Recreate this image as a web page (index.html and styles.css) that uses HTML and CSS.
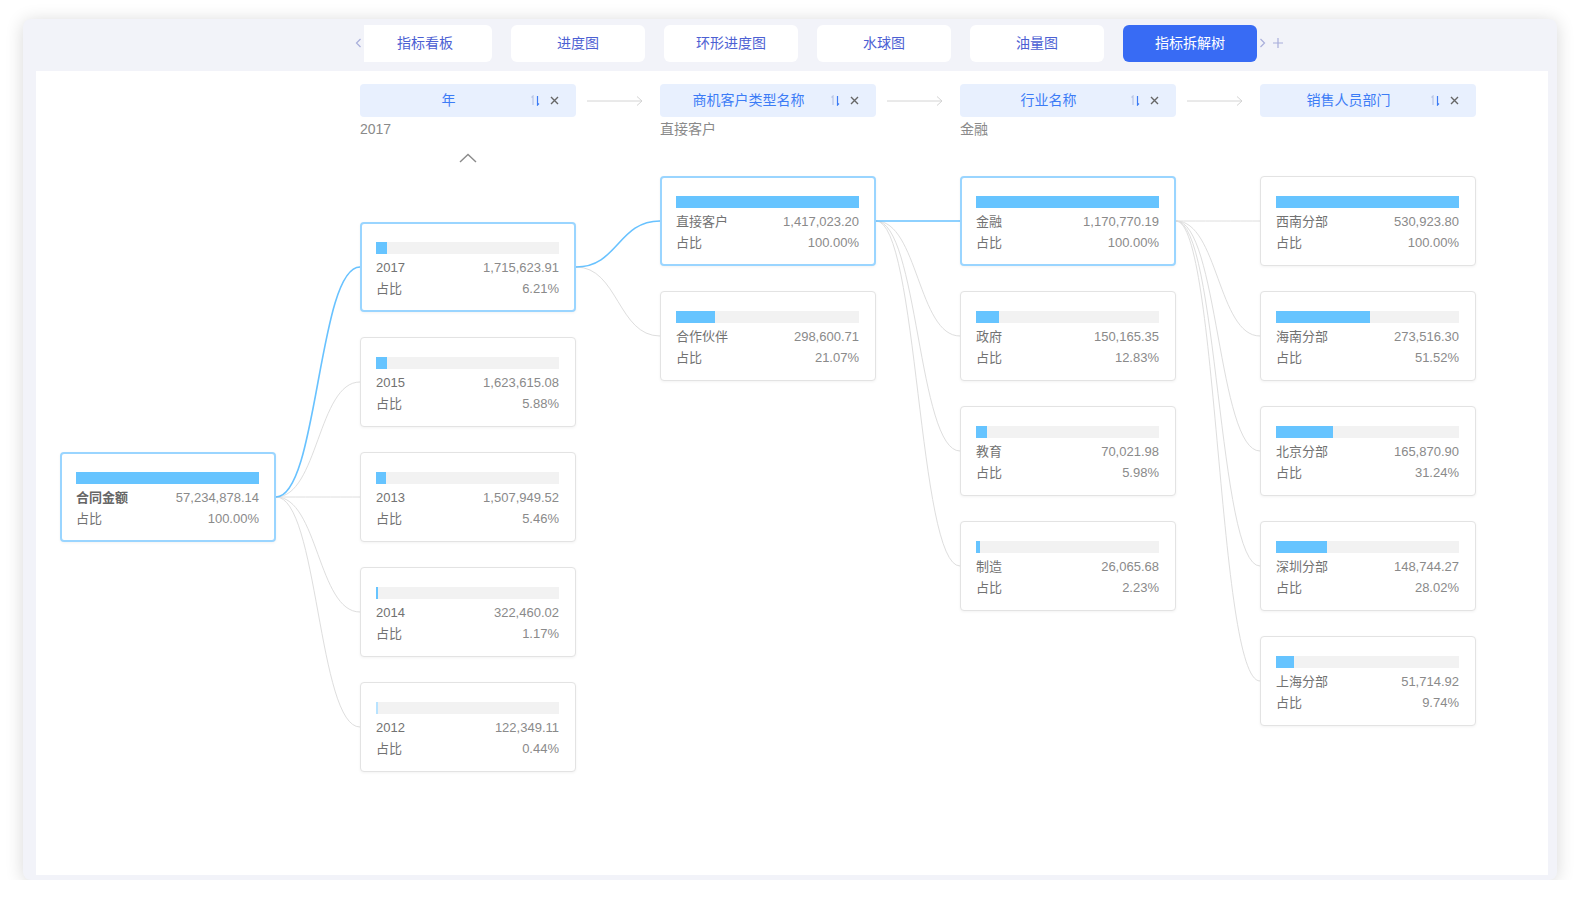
FILE: index.html
```html
<!DOCTYPE html>
<html lang="zh-CN">
<head>
  <meta charset="UTF-8">
  <meta name="viewport" content="width=device-width, initial-scale=1.0">
  <title>指标拆解树</title>
  <link rel="stylesheet" href="styles.css">
</head>
<body>
  <div class="window">
    <div class="tabbar">
      <svg class="tab-nav" width="9" height="10" viewBox="0 0 9 10"><path d="M5.5 1 1.5 5l4 4"/></svg>
      <div class="tab-view">
        <div class="tab-track">
          <div class="tab">指标看板</div>
          <div class="tab">进度图</div>
          <div class="tab">环形进度图</div>
          <div class="tab">水球图</div>
          <div class="tab">油量图</div>
          <div class="tab active">指标拆解树</div>
        </div>
      </div>
      <svg class="tab-nav next" width="9" height="10" viewBox="0 0 9 10"><path d="M1.5 1l4 4-4 4"/></svg>
      <svg class="tab-add" width="10" height="10" viewBox="0 0 10 10"><path d="M5 0v10M0 5h10"/></svg>
    </div>

    <div class="board" id="board">
      <svg class="links" id="links"></svg>

      <!-- 维度选择条 -->
      <div class="head-row">
        <div class="head">
          <div class="chip">
            <span class="chip-name">年</span>
            <span class="chip-tools">
              <svg class="sort" width="9" height="11" viewBox="0 0 9 11"><path class="up" d="M2 10V1L0.5 2.5"/><path class="down" d="M6.5 1v9L8 8.5"/></svg>
              <svg class="close" width="9" height="9" viewBox="0 0 9 9"><path d="M1 1l7 7M8 1 1 8"/></svg>
            </span>
          </div>
          <div class="picked">2017</div>
        </div>
        <div class="flow-arrow"><svg width="56" height="12" viewBox="0 0 56 12"><path d="M0 6h55M50 1.5 55 6l-5 4.5"/></svg></div>
        <div class="head">
          <div class="chip">
            <span class="chip-name">商机客户类型名称</span>
            <span class="chip-tools">
              <svg class="sort" width="9" height="11" viewBox="0 0 9 11"><path class="up" d="M2 10V1L0.5 2.5"/><path class="down" d="M6.5 1v9L8 8.5"/></svg>
              <svg class="close" width="9" height="9" viewBox="0 0 9 9"><path d="M1 1l7 7M8 1 1 8"/></svg>
            </span>
          </div>
          <div class="picked">直接客户</div>
        </div>
        <div class="flow-arrow"><svg width="56" height="12" viewBox="0 0 56 12"><path d="M0 6h55M50 1.5 55 6l-5 4.5"/></svg></div>
        <div class="head">
          <div class="chip">
            <span class="chip-name">行业名称</span>
            <span class="chip-tools">
              <svg class="sort" width="9" height="11" viewBox="0 0 9 11"><path class="up" d="M2 10V1L0.5 2.5"/><path class="down" d="M6.5 1v9L8 8.5"/></svg>
              <svg class="close" width="9" height="9" viewBox="0 0 9 9"><path d="M1 1l7 7M8 1 1 8"/></svg>
            </span>
          </div>
          <div class="picked">金融</div>
        </div>
        <div class="flow-arrow"><svg width="56" height="12" viewBox="0 0 56 12"><path d="M0 6h55M50 1.5 55 6l-5 4.5"/></svg></div>
        <div class="head">
          <div class="chip">
            <span class="chip-name">销售人员部门</span>
            <span class="chip-tools">
              <svg class="sort" width="9" height="11" viewBox="0 0 9 11"><path class="up" d="M2 10V1L0.5 2.5"/><path class="down" d="M6.5 1v9L8 8.5"/></svg>
              <svg class="close" width="9" height="9" viewBox="0 0 9 9"><path d="M1 1l7 7M8 1 1 8"/></svg>
            </span>
          </div>
        </div>
      </div>

      <!-- 拆解树节点 -->
      <div class="tree">
        <div class="col col-root">
          <div class="node on" id="n-root">
            <div class="bar"><i style="width:100%"></i></div>
            <div class="row"><span class="name strong">合同金额</span><span class="num">57,234,878.14</span></div>
            <div class="row"><span class="name">占比</span><span class="num">100.00%</span></div>
          </div>
        </div>

        <div class="col col-year">
          <div class="scroll-up"><svg width="18" height="10" viewBox="0 0 18 10"><path d="M1 9 9 1.5 17 9"/></svg></div>
          <div class="node on" id="n-2017" data-from="n-root">
            <div class="bar"><i style="width:6.21%"></i></div>
            <div class="row"><span class="name">2017</span><span class="num">1,715,623.91</span></div>
            <div class="row"><span class="name">占比</span><span class="num">6.21%</span></div>
          </div>
          <div class="node" data-from="n-root">
            <div class="bar"><i style="width:5.88%"></i></div>
            <div class="row"><span class="name">2015</span><span class="num">1,623,615.08</span></div>
            <div class="row"><span class="name">占比</span><span class="num">5.88%</span></div>
          </div>
          <div class="node" data-from="n-root">
            <div class="bar"><i style="width:5.46%"></i></div>
            <div class="row"><span class="name">2013</span><span class="num">1,507,949.52</span></div>
            <div class="row"><span class="name">占比</span><span class="num">5.46%</span></div>
          </div>
          <div class="node" data-from="n-root">
            <div class="bar"><i style="width:1.17%"></i></div>
            <div class="row"><span class="name">2014</span><span class="num">322,460.02</span></div>
            <div class="row"><span class="name">占比</span><span class="num">1.17%</span></div>
          </div>
          <div class="node" data-from="n-root">
            <div class="bar"><i class="faint" style="width:0.44%"></i></div>
            <div class="row"><span class="name">2012</span><span class="num">122,349.11</span></div>
            <div class="row"><span class="name">占比</span><span class="num">0.44%</span></div>
          </div>
        </div>

        <div class="col">
          <div class="node on" id="n-direct" data-from="n-2017">
            <div class="bar"><i style="width:100%"></i></div>
            <div class="row"><span class="name">直接客户</span><span class="num">1,417,023.20</span></div>
            <div class="row"><span class="name">占比</span><span class="num">100.00%</span></div>
          </div>
          <div class="node" data-from="n-2017">
            <div class="bar"><i style="width:21.07%"></i></div>
            <div class="row"><span class="name">合作伙伴</span><span class="num">298,600.71</span></div>
            <div class="row"><span class="name">占比</span><span class="num">21.07%</span></div>
          </div>
        </div>

        <div class="col">
          <div class="node on" id="n-finance" data-from="n-direct">
            <div class="bar"><i style="width:100%"></i></div>
            <div class="row"><span class="name">金融</span><span class="num">1,170,770.19</span></div>
            <div class="row"><span class="name">占比</span><span class="num">100.00%</span></div>
          </div>
          <div class="node" data-from="n-direct">
            <div class="bar"><i style="width:12.83%"></i></div>
            <div class="row"><span class="name">政府</span><span class="num">150,165.35</span></div>
            <div class="row"><span class="name">占比</span><span class="num">12.83%</span></div>
          </div>
          <div class="node" data-from="n-direct">
            <div class="bar"><i style="width:5.98%"></i></div>
            <div class="row"><span class="name">教育</span><span class="num">70,021.98</span></div>
            <div class="row"><span class="name">占比</span><span class="num">5.98%</span></div>
          </div>
          <div class="node" data-from="n-direct">
            <div class="bar"><i style="width:2.23%"></i></div>
            <div class="row"><span class="name">制造</span><span class="num">26,065.68</span></div>
            <div class="row"><span class="name">占比</span><span class="num">2.23%</span></div>
          </div>
        </div>

        <div class="col">
          <div class="node" data-from="n-finance">
            <div class="bar"><i style="width:100%"></i></div>
            <div class="row"><span class="name">西南分部</span><span class="num">530,923.80</span></div>
            <div class="row"><span class="name">占比</span><span class="num">100.00%</span></div>
          </div>
          <div class="node" data-from="n-finance">
            <div class="bar"><i style="width:51.52%"></i></div>
            <div class="row"><span class="name">海南分部</span><span class="num">273,516.30</span></div>
            <div class="row"><span class="name">占比</span><span class="num">51.52%</span></div>
          </div>
          <div class="node" data-from="n-finance">
            <div class="bar"><i style="width:31.24%"></i></div>
            <div class="row"><span class="name">北京分部</span><span class="num">165,870.90</span></div>
            <div class="row"><span class="name">占比</span><span class="num">31.24%</span></div>
          </div>
          <div class="node" data-from="n-finance">
            <div class="bar"><i style="width:28.02%"></i></div>
            <div class="row"><span class="name">深圳分部</span><span class="num">148,744.27</span></div>
            <div class="row"><span class="name">占比</span><span class="num">28.02%</span></div>
          </div>
          <div class="node" data-from="n-finance">
            <div class="bar"><i style="width:9.74%"></i></div>
            <div class="row"><span class="name">上海分部</span><span class="num">51,714.92</span></div>
            <div class="row"><span class="name">占比</span><span class="num">9.74%</span></div>
          </div>
        </div>
      </div>
    </div>
  </div>

  <script>
    // 根据节点位置绘制父子连线（选中路径为蓝色）
    function drawLinks() {
      const board = document.getElementById('board');
      const svg = document.getElementById('links');
      const box = board.getBoundingClientRect();
      let grey = '';
      let blue = '';

      document.querySelectorAll('.node[data-from]').forEach(node => {
        const parent = document.getElementById(node.dataset.from);
        const a = parent.getBoundingClientRect();
        const b = node.getBoundingClientRect();
        const x1 = a.right - box.left;
        const y1 = a.top + a.height / 2 - box.top;
        const x2 = b.left - box.left;
        const y2 = b.top + b.height / 2 - box.top;
        const mx = (x1 + x2) / 2;
        const d = `M${x1} ${y1} C${mx} ${y1} ${mx} ${y2} ${x2} ${y2}`;
        if (node.classList.contains('on')) {
          blue += `<path class="link on" d="${d}"/>`;
        } else {
          grey += `<path class="link" d="${d}"/>`;
        }
      });

      svg.innerHTML = grey + blue;
    }

    drawLinks();
  </script>
</body>
</html>
```

FILE: styles.css
```css
body {
  margin: 0;
  padding: 19px 0 0 23px;
  background: #fff;
  font-family: "Liberation Sans", "Noto Sans CJK SC", sans-serif;
}
.window {
  width: 1534px;
  height: 861px;
  box-sizing: border-box;
  padding: 0 9px 5px 13px;
  background: #f2f3f9;
  border-radius: 8px;
  box-shadow: 0 2px 18px rgba(0, 0, 0, 0.16);
}

/* 顶部页签 */
.tabbar {
  height: 52px;
  box-sizing: border-box;
  padding: 6px 0 0 319px;
  display: flex;
  align-items: flex-start;
}
.tab-nav {
  margin-top: 13px;
  fill: none;
  stroke: #a8aedb;
  stroke-width: 1.2;
}
.tab-nav.next {
  margin-left: 2px;
}
.tab-add {
  margin: 13px 0 0 5px;
  fill: none;
  stroke: #a8aedb;
  stroke-width: 1.2;
}
.tab-view {
  width: 893px;
  overflow: hidden;
}
.tab-track {
  display: flex;
  gap: 19px;
  margin-left: -6px;
}
.tab {
  flex: none;
  width: 134px;
  height: 37px;
  line-height: 36px;
  text-align: center;
  background: #fff;
  border-radius: 6px;
  color: #4c60d3;
  font-size: 14px;
}
.tab.active {
  background: #386bf4;
  color: #fff;
}

/* 画布 */
.board {
  position: relative;
  height: 804px;
  background: #fff;
  overflow: hidden;
}
.links {
  position: absolute;
  left: 0;
  top: 0;
  width: 100%;
  height: 100%;
  pointer-events: none;
}
.link {
  fill: none;
  stroke: #dedede;
  stroke-width: 1;
}
.link.on {
  stroke: #68c2ff;
  stroke-width: 1.6;
}

.head-row {
  display: flex;
  align-items: flex-start;
  padding: 13px 0 0 324px;
}
.head {
  width: 216px;
}
.chip {
  height: 33px;
  display: flex;
  align-items: center;
  background: #e8f0fe;
  border-radius: 4px;
}
.chip-name {
  flex: 1;
  padding: 0 0 3px 6px;
  text-align: center;
  color: #3c7cf6;
  font-size: 14px;
}
.chip-tools {
  display: flex;
  align-items: center;
  gap: 10px;
  padding-right: 17px;
}
.sort path {
  fill: none;
  stroke-width: 1.2;
}
.sort .up {
  stroke: #b9c6e6;
}
.sort .down {
  stroke: #3c7cf6;
}
.close {
  fill: none;
  stroke: #666;
  stroke-width: 1.4;
}
.picked {
  margin-top: 2px;
  line-height: 20px;
  font-size: 14px;
  color: #8a8a8a;
}
.flow-arrow {
  width: 84px;
  height: 33px;
  box-sizing: border-box;
  padding-left: 11px;
  display: flex;
  align-items: center;
}
.flow-arrow svg {
  fill: none;
  stroke: #d4d4d4;
  stroke-width: 1;
}

.tree {
  position: relative;
  display: flex;
  gap: 84px;
  padding-left: 24px;
}
.col {
  width: 216px;
  display: flex;
  flex-direction: column;
  gap: 25px;
  padding-top: 37px;
}
.col-root {
  padding-top: 313px;
}
.col-year {
  padding-top: 0;
  gap: 0;
}
.col-year .node + .node {
  margin-top: 25px;
}
.scroll-up {
  height: 83px;
  box-sizing: border-box;
  padding-top: 10px;
  text-align: center;
}
.scroll-up svg {
  fill: none;
  stroke: #8a8a8a;
  stroke-width: 1.4;
}

/* 节点卡片 */
.node {
  position: relative;
  z-index: 1;
  width: 216px;
  height: 90px;
  box-sizing: border-box;
  padding: 19px 16px 0 15px;
  background: #fff;
  border: 1px solid #e3e3e3;
  border-radius: 4px;
  box-shadow: 0 1px 3px rgba(0, 0, 0, 0.05);
}
.node.on {
  border: 2px solid #9ad5ff;
  padding: 18px 15px 0 14px;
}
.bar {
  height: 12px;
  margin-bottom: 3px;
  background: #f2f2f2;
}
.bar i {
  display: block;
  height: 100%;
  min-width: 2px;
  background: #66c4ff;
}
.bar i.faint {
  background: #b8e3ff;
}
.row {
  display: flex;
  justify-content: space-between;
  font-size: 13px;
  line-height: 21px;
}
.name {
  color: #727272;
}
.name.strong {
  color: #666;
  font-weight: 600;
}
.num {
  color: #8a8a8a;
}
```
